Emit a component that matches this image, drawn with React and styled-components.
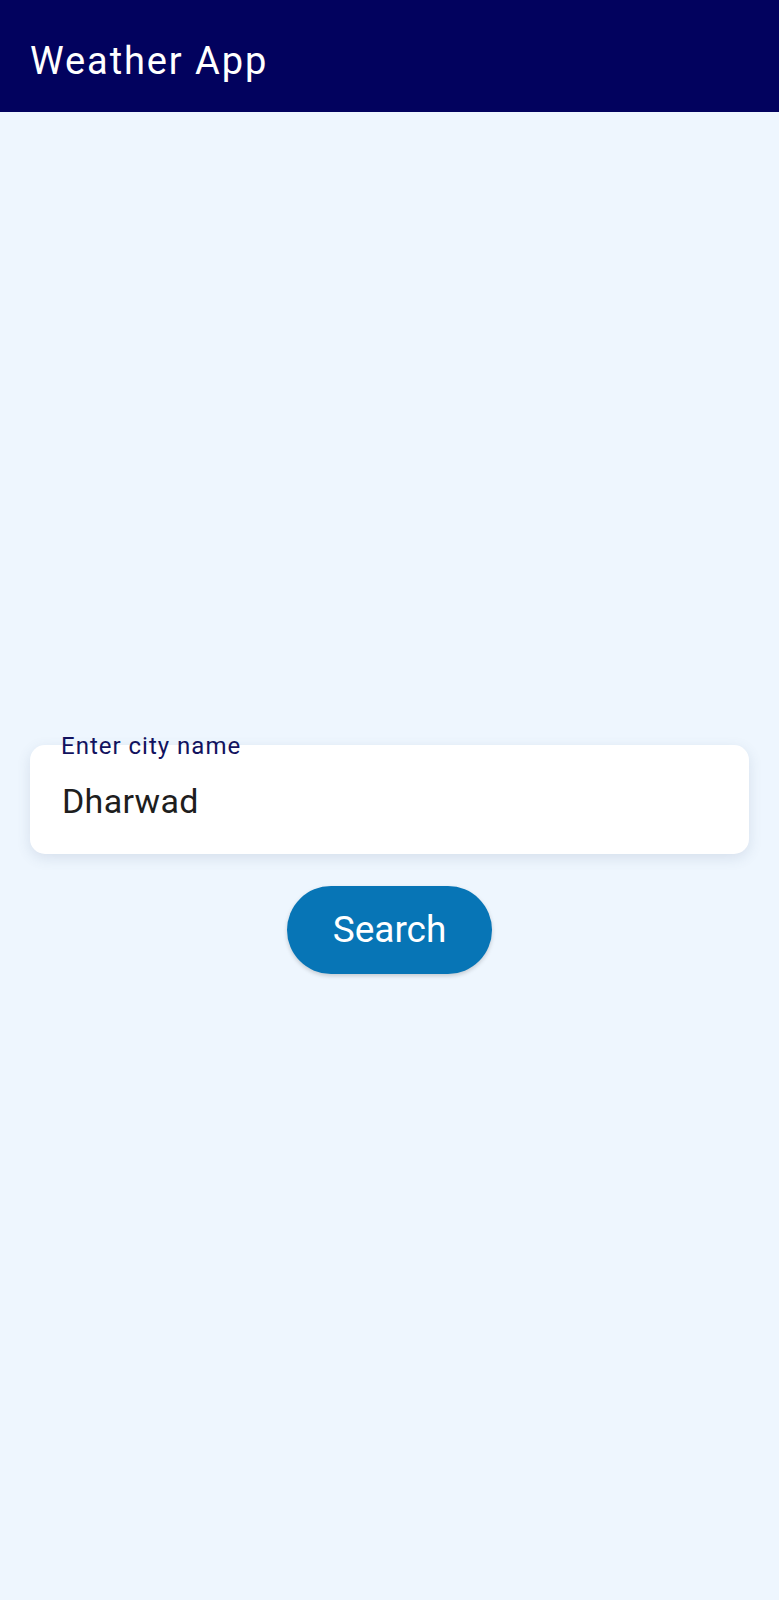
import React from "react";
import styled, { createGlobalStyle } from "styled-components";

const Global = createGlobalStyle`
  html, body { margin: 0; padding: 0; }
  body { background: #eef6fe; font-family: Roboto, "Liberation Sans", sans-serif; }
`;

const Page = styled.div`
  width: 779px;
  min-height: 1600px;
  display: flex;
  flex-direction: column;
  background: #eef6fe;
`;

const AppBar = styled.header`
  height: 112px;
  background: #02025e;
  display: flex;
  align-items: center;
  padding: 9px 0 0 30px;
  box-sizing: border-box;
`;

const Title = styled.h1`
  margin: 0;
  font-weight: 400;
  font-size: 38px;
  letter-spacing: 1.9px;
  color: #ffffff;
`;

const Body = styled.main`
  flex: 1;
  display: flex;
  flex-direction: column;
  justify-content: center;
  align-items: center;
  padding: 6px 30px 0 30px;
  gap: 32px;
`;

const Field = styled.div`
  position: relative;
  width: 100%;
  height: 109px;
  background: #ffffff;
  border-radius: 15px;
  box-shadow: 0 4px 14px rgba(70, 90, 130, 0.14);
  display: flex;
  align-items: center;
  padding-left: 32px;
  box-sizing: border-box;
`;

const Label = styled.span`
  position: absolute;
  left: 31px;
  top: -13px;
  font-size: 24px;
  color: #12125e;
  letter-spacing: 1px;
`;

const Value = styled.span`
  font-size: 34px;
  color: #1e1e1e;
  letter-spacing: 0.3px;
  padding-top: 4px;
`;

const SearchButton = styled.button`
  height: 88px;
  padding: 0 46px;
  border: none;
  border-radius: 44px;
  background: #0775b6;
  color: #ffffff;
  font-family: Roboto, "Liberation Sans", sans-serif;
  font-size: 37px;
  box-shadow: 0 2px 4px rgba(0, 0, 0, 0.18);
`;

export default function App() {
  return (
    <Page>
      <Global />
      <AppBar>
        <Title>Weather App</Title>
      </AppBar>
      <Body>
        <Field>
          <Label>Enter city name</Label>
          <Value>Dharwad</Value>
        </Field>
        <SearchButton>Search</SearchButton>
      </Body>
    </Page>
  );
}
